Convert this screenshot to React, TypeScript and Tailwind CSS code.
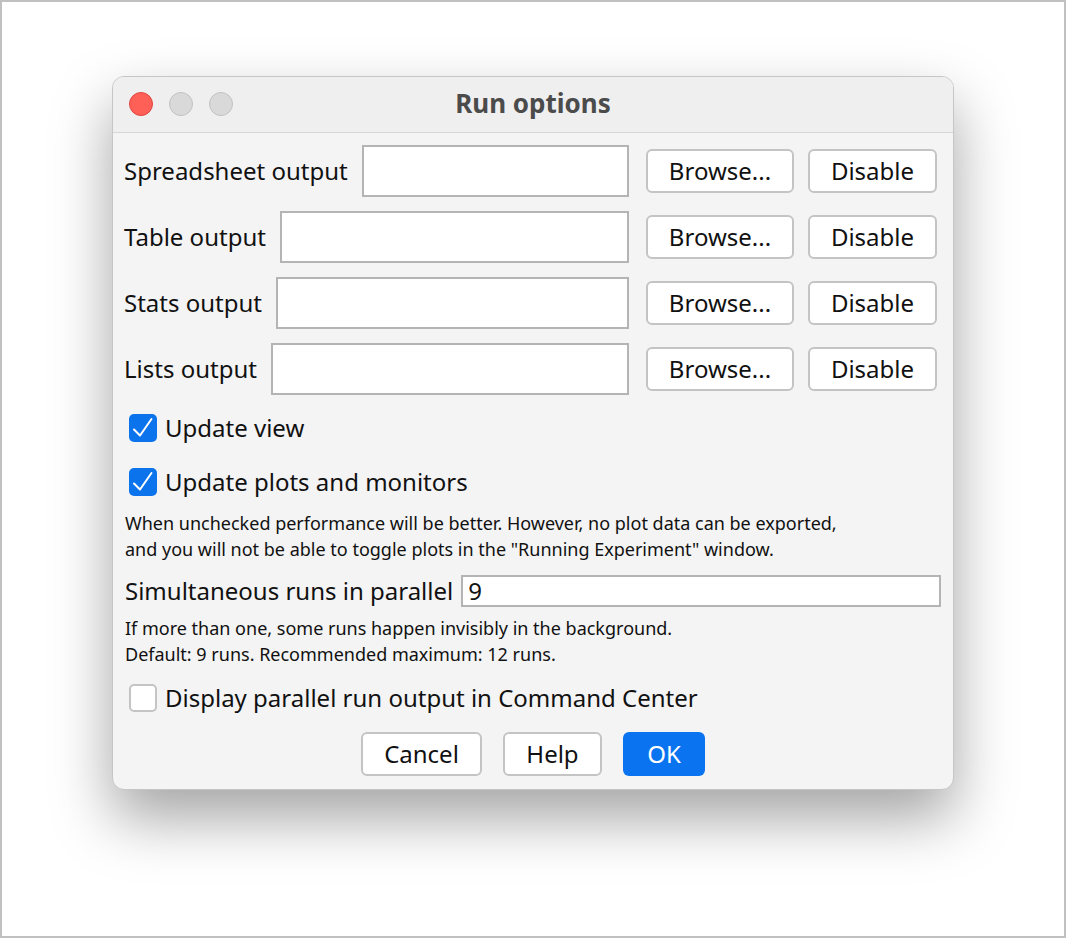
import React from "react";

const font = { fontFamily: '"Noto Sans", "Open Sans", sans-serif' };

function Check() {
  return (
    <div className="w-[28px] h-[28px] rounded-[5px] bg-[#0b73ec] shrink-0">
      <svg width="28" height="28" viewBox="0 0 28 28">
        <polyline points="5,15.5 11,21.5 22.5,5" fill="none" stroke="white" strokeWidth="2" strokeLinecap="round" strokeLinejoin="round" />
      </svg>
    </div>
  );
}

function Btn({ children, w }: { children: React.ReactNode; w: string }) {
  return (
    <div className={`${w} h-[44px] shrink-0 rounded-[6px] border-2 border-[#c4c4c4] bg-white flex items-center justify-center text-[24px] text-[#111]`}>
      {children}
    </div>
  );
}

function Row({ label }: { label: string }) {
  return (
    <div className="flex items-center h-[52px]">
      <span className="text-[24px] text-[#111] whitespace-nowrap mr-[14px]">{label}</span>
      <div className="flex-1 h-[52px] bg-white border-2 border-[#b4b4b4]" />
      <div className="ml-[17px] flex gap-[14px]">
        <Btn w="w-[148px]">Browse...</Btn>
        <Btn w="w-[129px]">Disable</Btn>
      </div>
    </div>
  );
}

export default function App() {
  return (
    <div className="w-[1066px] h-[938px] bg-white border-2 border-[#c0c0c0] flex justify-center pt-[74px]" style={font}>
      <div className="w-[842px] h-[714px] rounded-[12px] border border-[#c6c6c6] bg-[#f4f4f4] overflow-hidden shadow-[0_28px_60px_rgba(0,0,0,0.36)] flex flex-col">
        <div className="h-[56px] bg-[#efefef] border-b border-[#d6d6d6] relative flex items-center justify-center shrink-0 pb-[3px]">
          <div className="absolute left-[16px] top-[15px] flex gap-[16px]">
            <div className="w-[24px] h-[24px] rounded-full bg-[#fe5f57] border border-[#e2463f]" />
            <div className="w-[24px] h-[24px] rounded-full bg-[#d9d9d9] border border-[#c2c2c2]" />
            <div className="w-[24px] h-[24px] rounded-full bg-[#d9d9d9] border border-[#c2c2c2]" />
          </div>
          <span className="text-[26px] font-bold text-[#4b4b4b]">Run options</span>
        </div>
        <div className="flex flex-col pl-[11px] pr-[16px] pt-[12px]">
          <div className="flex flex-col gap-[14px]">
            <Row label="Spreadsheet output" />
            <Row label="Table output" />
            <Row label="Stats output" />
            <Row label="Lists output" />
          </div>
          <div className="mt-[19px] h-[28px] flex items-center pl-[5px] gap-[8px]">
            <Check />
            <span className="text-[24px] text-[#111]">Update view</span>
          </div>
          <div className="mt-[26px] h-[28px] flex items-center pl-[5px] gap-[8px]">
            <Check />
            <span className="text-[24px] text-[#111]">Update plots and monitors</span>
          </div>
          <div className="mt-[14px] text-[18px] leading-[26px] text-[#111] pl-[1px]">
            <div>When unchecked performance will be better. However, no plot data can be exported,</div>
            <div>and you will not be able to toggle plots in the "Running Experiment" window.</div>
          </div>
          <div className="mt-[13px] h-[32px] flex items-center pl-[1px]">
            <span className="text-[24px] text-[#111] whitespace-nowrap mr-[8px]">Simultaneous runs in parallel</span>
            <div className="flex-1 h-[32px] bg-white border-2 border-[#b4b4b4] flex items-center px-[5px] text-[24px] text-[#111] mr-[-4px]">9</div>
          </div>
          <div className="mt-[8px] text-[18px] leading-[26px] text-[#111] pl-[1px]">
            <div>If more than one, some runs happen invisibly in the background.</div>
            <div>Default: 9 runs. Recommended maximum: 12 runs.</div>
          </div>
          <div className="mt-[17px] h-[28px] flex items-center pl-[5px] gap-[8px]">
            <div className="w-[28px] h-[28px] rounded-[5px] bg-white border-2 border-[#c4c4c4] shrink-0" />
            <span className="text-[24px] text-[#111]">Display parallel run output in Command Center</span>
          </div>
          <div className="mt-[20px] flex justify-center gap-[21px] pl-[5px]">
            <Btn w="w-[121px]">Cancel</Btn>
            <Btn w="w-[99px]">Help</Btn>
            <div className="w-[82px] h-[44px] rounded-[6px] bg-[#0a74f0] text-white text-[24px] flex items-center justify-center">OK</div>
          </div>
        </div>
      </div>
    </div>
  );
}
